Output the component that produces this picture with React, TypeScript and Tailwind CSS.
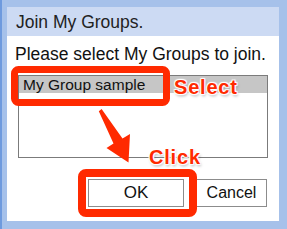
import React from 'react'

const outline =
  '[text-shadow:0_0_2px_#fff,1px_1px_1px_#fff,-1px_-1px_1px_#fff,1px_-1px_1px_#fff,-1px_1px_1px_#fff,1px_2px_3px_rgba(0,0,0,0.35)]'

const App: React.FC = () => {
  return (
    <div className="relative w-[287px] h-[229px] bg-[#a6c1ea] border-l-2 border-[#6e9ade] pl-[5px] pr-[8px] pt-[7px] pb-[8px] font-['Liberation_Sans',Arial,sans-serif] text-[#111] overflow-hidden">
      <div className="flex flex-col h-full bg-white">
        <div className="h-[29px] shrink-0 bg-[#ccdaf3] flex items-center pl-[9px] pt-[1px] text-[17.5px] text-[#222]">
          Join My Groups.
        </div>
        <p className="mt-[8px] pl-[8px] text-[17.5px] leading-[20px] whitespace-nowrap">
          Please select My Groups to join.
        </p>
        <div className="mt-[11px] ml-[11px] w-[250px] h-[83px] shrink-0 border border-[#7b7b7b]">
          <div className="h-[17px] bg-[#c6c6c6] pl-[4px] text-[15.5px] leading-[17px] whitespace-nowrap">
            My Group sample
          </div>
        </div>
        <div className="mt-[21px] flex justify-end gap-[12px] pr-[12px]">
          <button className="w-[96px] h-[28px] border border-[#8c8c8c] bg-white text-[17px]">OK</button>
          <button className="w-[71px] h-[28px] border border-[#8c8c8c] bg-white text-[16px]">Cancel</button>
        </div>
      </div>

      {/* annotations */}
      <svg className="absolute left-0 top-0 pointer-events-none" width="287" height="229" viewBox="0 0 287 229">
        <rect x="12.5" y="69.5" width="152" height="33" rx="4" fill="none" stroke="#ff2a00" strokeWidth="7" />
        <rect x="80" y="173" width="111" height="40" rx="4" fill="none" stroke="#ff2a00" strokeWidth="8" />
        <polygon
          points="96.8,111.2 99.6,109 120.5,138.5 128,134 126.5,162.5 104.5,148 111.5,143.5"
          fill="#ff2a00"
        />
      </svg>
      <span className={`absolute left-[172px] top-[77px] text-[20px] leading-[20px] font-bold tracking-[0.8px] text-[#ff2a00] ${outline}`}>
        Select
      </span>
      <span className={`absolute left-[147px] top-[147px] text-[20px] leading-[20px] font-bold tracking-[0.8px] text-[#ff2a00] ${outline}`}>
        Click
      </span>
    </div>
  )
}

export default App
